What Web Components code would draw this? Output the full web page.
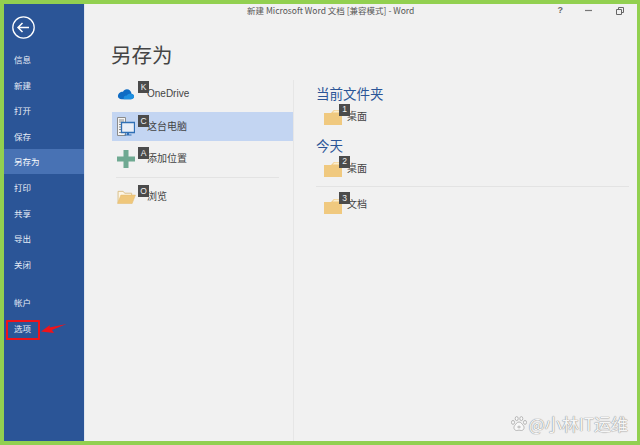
<!DOCTYPE html>
<html lang="zh">
<head>
<meta charset="utf-8">
<title>另存为</title>
<style>
  html, body { margin: 0; padding: 0; height: 100%; }
  body { font-family: "Liberation Sans", "Noto Sans CJK SC", sans-serif; overflow: hidden; }
</style>
</head>
<body>
<word-backstage>
  <nav-rail slot="rail">
    <nav-item>信息</nav-item>
    <nav-item>新建</nav-item>
    <nav-item>打开</nav-item>
    <nav-item>保存</nav-item>
    <nav-item active>另存为</nav-item>
    <nav-item>打印</nav-item>
    <nav-item>共享</nav-item>
    <nav-item>导出</nav-item>
    <nav-item>关闭</nav-item>
    <nav-item slot="bottom">帐户</nav-item>
    <nav-item slot="bottom" marked>选项</nav-item>
  </nav-rail>
  <place-row icon="cloud" key="K">OneDrive</place-row>
  <place-row icon="pc" key="C" selected>这台电脑</place-row>
  <place-row icon="plus" key="A">添加位置</place-row>
  <place-row icon="open" key="O" ruled>浏览</place-row>
  <folder-group slot="recent" title="当前文件夹">
    <folder-row key="1">桌面</folder-row>
  </folder-group>
  <folder-group slot="recent" title="今天" spaced>
    <folder-row key="2">桌面</folder-row>
  </folder-group>
  <folder-group slot="recent" ruled>
    <folder-row key="3">文档</folder-row>
  </folder-group>
</word-backstage>

<script>
const cjkStack = '"Noto Sans CJK SC", "Liberation Sans", sans-serif';

const placeIcons = {
  cloud: `<svg width="18" height="12" viewBox="0 0 20 14">
    <path d="M5 13h11c2 0 3.400-1.300 3.400-3 0-1.600-1.200-2.800-2.800-3C16 3.800 13.800 1.500 11 1.500 9 1.500 7.300 2.600 6.500 4.300 3.200 4.200.6 6.600.6 9.600.6 11.600 2.400 13 5 13z" fill="#0f6cc4"/>
    <path d="M7.200 13h9c2 0 3.200-1.300 3.200-3 0-1.500-1.100-2.700-2.700-2.900-2.400-.8-4.700 0-6 1.800-1.800-.3-3.600.8-3.500 4.100z" fill="#1e8fe0"/>
  </svg>`,
  pc: `<svg width="18" height="19" viewBox="0 0 18 19">
    <path d="M.5.500h8v18h-8z" fill="#f4f4f4" stroke="#8c8c8c"/>
    <path d="M2 3h5M2 5h5M2 7.500h2M2 10h2M2 12.500h2M2 15.500h2" stroke="#8c8c8c"/>
    <path d="M4.500 5.500h13v10h-13z" fill="#e9eef7" stroke="#2f6fb5" stroke-width="1.300"/>
    <path d="M10 16h2v1.500h-2zM7.500 17.500h7v1h-7z" fill="#2f6fb5"/>
  </svg>`,
  plus: `<svg width="18" height="18" viewBox="0 0 18 18">
    <path d="M6.500 0h5v6.500H18v5h-6.500V18h-5v-6.500H0v-5h6.500z" fill="#6fa992"/>
  </svg>`,
  open: `<svg width="19" height="15" viewBox="0 0 20 16">
    <path d="M1 15V2.500h5.500l1.500 2h7.500V7" fill="#fdf6e6" stroke="#d9bd85"/>
    <path d="M.5 15.500 4 6.500h15.500l-3.500 9z" fill="#efc77b" stroke="#e6bd72" stroke-width=".6"/>
  </svg>`
};

class NavItem extends HTMLElement {
  constructor() {
    super();
    this.attachShadow({mode: "open"});
    this.shadowRoot.innerHTML = `
      <style>
        :host {
          display: flex;
          align-items: center;
          position: relative;
          height: 25.6px;
          padding-left: 10px;
          font: 8.5px/1 ${cjkStack};
          color: #e6ecf6;
        }
        :host([active]) { background: #4872b4; color: #fff; }
        .mark {
          display: none;
          position: absolute;
          left: 2px;
          top: 4.5px;
          width: 30px;
          height: 16px;
          border: 2px solid #f0131a;
          border-radius: 1px;
        }
        :host([marked]) .mark { display: block; }
      </style>
      <slot></slot>
      <div class="mark"></div>
    `;
  }
}

class NavRail extends HTMLElement {
  constructor() {
    super();
    this.attachShadow({mode: "open"});
    this.shadowRoot.innerHTML = `
      <style>
        :host {
          display: flex;
          flex-direction: column;
          position: relative;
          width: 80px;
          background: #2b5597;
          border-right: 1px solid #dfe5ee;
        }
        .back { height: 30.5px; padding: 12px 0 0 8px; }
        .back svg { display: block; }
        .bottom { margin-top: 13px; }
        .arrow { position: absolute; left: 36px; top: 319px; }
      </style>
      <div class="back">
        <svg width="23" height="23" viewBox="0 0 23 23">
          <circle cx="11.500" cy="11.500" r="10.700" fill="none" stroke="#fff" stroke-width="1.300"/>
          <path d="M6 11.500h11M10.500 7 6 11.500l4.500 4.500" fill="none" stroke="#fff" stroke-width="1.500"/>
        </svg>
      </div>
      <slot></slot>
      <div class="bottom"><slot name="bottom"></slot></div>
      <svg class="arrow" width="28" height="14" viewBox="0 0 28 14">
        <path d="M1 8.500 10 2 9.500 4.500 26.500 1 12 7 14 10z" fill="#f0131a"/>
      </svg>
    `;
  }
}

class KeyTip extends HTMLElement {
  constructor() {
    super();
    this.attachShadow({mode: "open"});
    this.shadowRoot.innerHTML = `
      <style>
        :host {
          display: flex;
          align-items: center;
          justify-content: center;
          position: absolute;
          width: 11px;
          height: 12px;
          background: #4b4b4b;
          color: #f1f1f1;
          font: 8.500px/1 "Liberation Sans", sans-serif;
        }
      </style>
      <slot></slot>
    `;
  }
}
customElements.define("key-tip", KeyTip);

class PlaceRow extends HTMLElement {
  constructor() {
    super();
    const icon = placeIcons[this.getAttribute("icon")];
    const key = this.getAttribute("key");
    this.attachShadow({mode: "open"});
    this.shadowRoot.innerHTML = `
      <style>
        :host {
          display: flex;
          align-items: center;
          position: relative;
          box-sizing: border-box;
          width: 181px;
          height: 26px;
          padding-top: 1px;
          margin-bottom: 6px;
          font: 10px/1 "Liberation Sans", ${cjkStack};
          color: #444;
        }
        :host([selected]) { height: 29px; padding-top: 0; margin-bottom: 0; background: #c3d5f2; }
        :host([icon="plus"]) { height: 36px; padding-top: 0; margin-bottom: 0; }
        :host([ruled]) { height: 38px; margin-bottom: 0; }
        :host([ruled])::before {
          content: "";
          position: absolute;
          left: 4px;
          right: 14px;
          top: 0;
          border-top: 1px solid #e3e3e3;
        }
        .icon { display: flex; justify-content: center; width: 28px; margin-right: 7px; flex: none; }
        key-tip { left: 26px; top: 1px; }
        :host([selected]) key-tip { top: 3px; }
        :host([icon="plus"]) key-tip { top: 6px; }
        :host([ruled]) key-tip { top: 8px; }
      </style>
      <span class="icon">${icon}</span>
      <slot></slot>
      <key-tip>${key}</key-tip>
    `;
  }
}

class FolderRow extends HTMLElement {
  constructor() {
    super();
    const key = this.getAttribute("key");
    this.attachShadow({mode: "open"});
    this.shadowRoot.innerHTML = `
      <style>
        :host {
          display: flex;
          align-items: center;
          position: relative;
          height: 24px;
          padding-left: 8px;
          font: 10px/1 ${cjkStack};
          color: #444;
        }
        svg { flex: none; margin: 3px 5px 0 0; }
        key-tip { left: 23px; top: 0; }
      </style>
      <svg width="18" height="16" viewBox="0 0 18 16">
        <path d="M0 4h7l3-3h5v2h3v13H0z" fill="#f0c97f"/>
        <path d="M10.500 1.500h4.500v2H8.500z" fill="#fbeecf"/>
      </svg>
      <slot></slot>
      <key-tip>${key}</key-tip>
    `;
  }
}

class FolderGroup extends HTMLElement {
  constructor() {
    super();
    const title = this.getAttribute("title");
    this.attachShadow({mode: "open"});
    this.shadowRoot.innerHTML = `
      <style>
        :host { display: block; margin-bottom: 9px; }
        :host([spaced]) { margin-bottom: 0; }
        :host([spaced]) h2 { margin-bottom: 2px; }
        :host([ruled]) { border-top: 1px solid #e3e3e3; margin-top: 6.5px; padding-top: 5px; margin-bottom: 0; }
        h2 {
          margin: 0 0 1.5px;
          height: 17px;
          font: 400 13.500px/17px ${cjkStack};
          color: #2b5597;
        }
        h2:empty { display: none; }
      </style>
      <h2>${title || ""}</h2>
      <slot></slot>
    `;
  }
}

class WordBackstage extends HTMLElement {
  constructor() {
    super();
    this.attachShadow({mode: "open"});
    this.shadowRoot.innerHTML = `
      <style>
        :host {
          display: flex;
          position: relative;
          width: 640px;
          height: 445px;
          box-sizing: border-box;
          border: solid #92d050;
          border-width: 4px 3px 4px 4px;
          background: #f1f1f1;
          overflow: hidden;
        }
        main { flex: 1; display: flex; flex-direction: column; min-width: 0; }
        .bar {
          display: flex;
          align-items: center;
          height: 13px;
          padding: 0 13px 0 162px;
          font: 8.5px/1 ${cjkStack};
          color: #555;
          white-space: nowrap;
        }
        .controls {
          display: flex;
          align-items: center;
          margin-left: auto;
          gap: 24px;
          color: #666;
          font: 700 9px/1 "Liberation Sans", sans-serif;
        }
        .controls span { margin-right: -2px; }
        .controls svg { display: block; }
        h1 {
          margin: 23px 0 0 26px;
          height: 28px;
          font: 400 20.500px/28px ${cjkStack};
          color: #444;
        }
        .panes { flex: 1; display: flex; margin-top: 12px; padding-left: 27px; }
        .places { width: 181px; }
        .recent {
          flex: 1;
          padding: 5px 8px 0 22px;
          border-left: 1px solid #e6e6e6;
        }
        .watermark {
          display: flex;
          align-items: center;
          gap: 2px;
          position: absolute;
          right: 9px;
          bottom: 9px;
          font: 17px/1 ${cjkStack};
          color: #f6f6f6;
          text-shadow: 0 0 1px #8a8a8a, 0 0 1px #8a8a8a;
          white-space: nowrap;
        }
      </style>
      <slot name="rail"></slot>
      <main>
        <div class="bar">
          <span>新建 Microsoft Word 文档 [兼容模式] - Word</span>
          <span class="controls">
            <span>?</span>
            <svg width="7" height="7" viewBox="0 0 7 7"><path d="M0 3.500h7" stroke="#777" stroke-width="1.200"/></svg>
            <svg width="8" height="8" viewBox="0 0 8 8"><path d="M.5 2.500h5v5h-5zM2.500 2.500v-2h5v5h-2" fill="none" stroke="#666"/></svg>
          </span>
        </div>
        <h1>另存为</h1>
        <div class="panes">
          <div class="places"><slot></slot></div>
          <div class="recent"><slot name="recent"></slot></div>
        </div>
      </main>
      <div class="watermark">
        <svg width="16" height="16" viewBox="0 0 16 16">
          <g fill="#f8f8f8" stroke="#a8a8a8" stroke-width=".8">
            <ellipse cx="5.700" cy="2.600" rx="1.500" ry="2"/>
            <ellipse cx="10.300" cy="2.600" rx="1.500" ry="2"/>
            <ellipse cx="2" cy="6.400" rx="1.500" ry="2"/>
            <ellipse cx="14" cy="6.400" rx="1.500" ry="2"/>
            <path d="M8 6c2 0 3 2 4.300 3.500 1.500 1.800.7 5-2 5-1 0-1.500-.4-2.300-.4s-1.300.4-2.300.4c-2.700 0-3.500-3.200-2-5C5 8 6 6 8 6z"/>
          </g>
          <path d="M6.200 11h3.600M8 9.500v3" stroke="#a8a8a8" stroke-width=".8"/>
        </svg>
        <span>@小林IT运维</span>
      </div>
    `;
  }
}

customElements.define("nav-item", NavItem);
customElements.define("nav-rail", NavRail);
customElements.define("place-row", PlaceRow);
customElements.define("folder-row", FolderRow);
customElements.define("folder-group", FolderGroup);
customElements.define("word-backstage", WordBackstage);
</script>
</body>
</html>
